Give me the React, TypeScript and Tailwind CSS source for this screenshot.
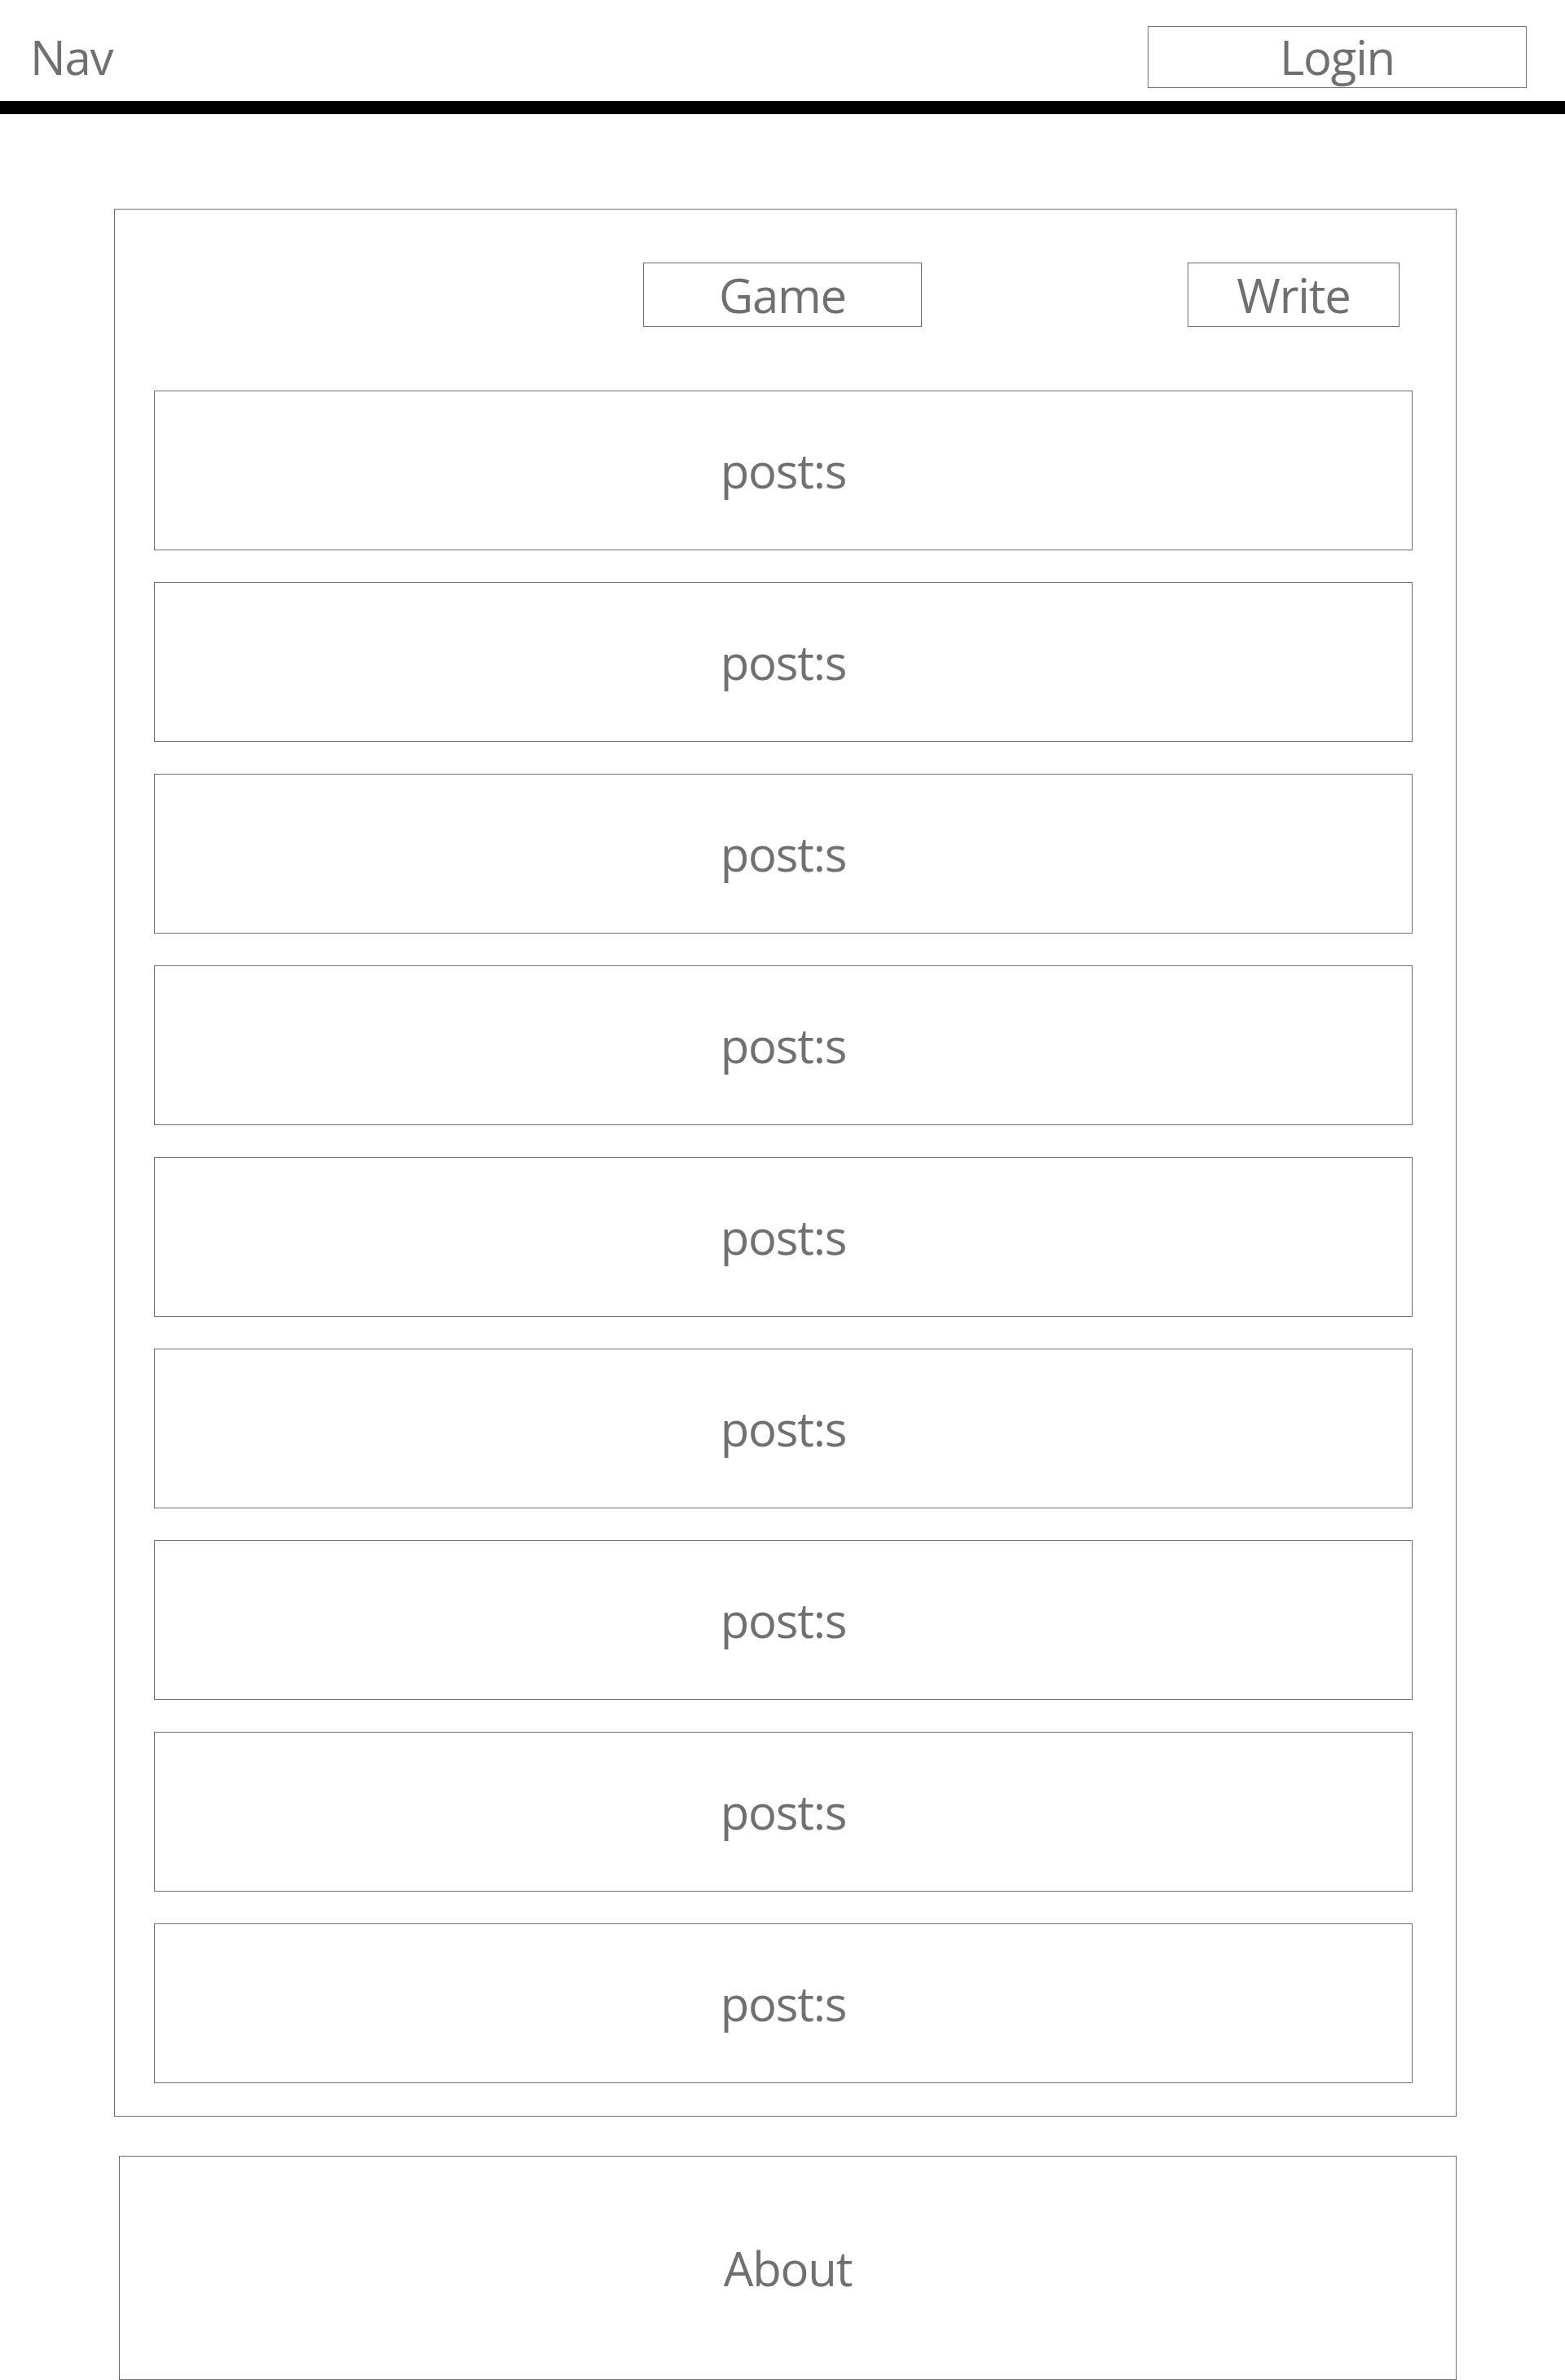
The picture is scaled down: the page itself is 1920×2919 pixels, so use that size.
import React from 'react';

const posts = Array.from({ length: 9 }, (_, i) => i);

const App = () => {
  return (
    <div className="w-[1920px] min-h-[2919px] bg-white text-[#707070] text-[58px] tracking-[-0.02em] leading-none font-['Open_Sans',sans-serif]">
      {/* top bar */}
      <header className="h-[124px] pt-[15px] pl-[37px] pr-[47px] flex items-center justify-between">
        <span>Nav</span>
        <button className="w-[465px] h-[76px] border border-[#707070] flex items-center justify-center">
          Login
        </button>
      </header>
      <div className="h-4 bg-black"></div>

      {/* board */}
      <main className="mt-[116px] ml-[140px] w-[1647px] border border-[#707070] pt-[65px] pb-[40px]">
        <div className="flex pl-[648px]">
          <button className="w-[342px] h-[79px] border border-[#707070] flex items-center justify-center">
            Game
          </button>
          <button className="ml-[326px] w-[260px] h-[79px] border border-[#707070] flex items-center justify-center">
            Write
          </button>
        </div>

        <div className="mt-[78px] pl-[48px] pr-[53px] flex flex-col gap-[39px]">
          {posts.map((i) => (
            <div key={i} className="h-[196px] border border-[#707070] flex items-center justify-center">
              post:s
            </div>
          ))}
        </div>
      </main>

      <footer className="mt-[48px] ml-[146px] w-[1641px] h-[275px] border border-[#707070] flex items-center justify-center">
        About
      </footer>
    </div>
  );
};

export default App;
